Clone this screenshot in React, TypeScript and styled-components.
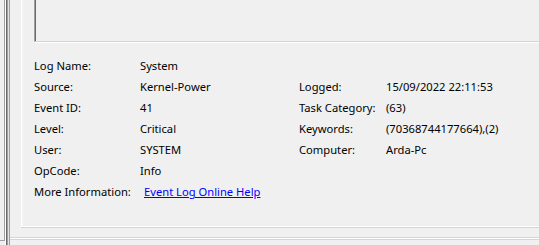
import React from 'react';
import styled, { createGlobalStyle } from 'styled-components';

const GlobalStyle = createGlobalStyle`
  html, body {
    margin: 0;
    padding: 0;
    background: #f0f0f0;
  }
  body {
    font-family: 'Noto Sans', 'Liberation Sans', sans-serif;
    font-size: 11px;
    color: #000;
  }
`;

const leftRows = [
  { label: 'Source:', value: 'Kernel-Power' },
  { label: 'Event ID:', value: '41' },
  { label: 'Level:', value: 'Critical' },
  { label: 'User:', value: 'SYSTEM' },
];

const rightRows = [
  { label: 'Logged:', value: '15/09/2022 22:11:53' },
  { label: 'Task Category:', value: '(63)' },
  { label: 'Keywords:', value: '(70368744177664),(2)' },
  { label: 'Computer:', value: 'Arda-Pc' },
];

const Window = styled.div`
  display: flex;
  height: 245px;
  width: 539px;
  overflow: hidden;
`;

const SidePane = styled.div`
  width: 4px;
  height: 240px;
  border-right: 1px solid #a0a0a0;
  border-bottom: 1px solid #a0a0a0;
  background: #f0f0f0;
`;

const Splitter = styled.div`
  width: 3px;
  height: 245px;
  border-left: 1px solid #ffffff;
  border-right: 1px solid #a0a0a0;
  background: linear-gradient(to right, #696969 0 1px, #a0a0a0 1px 2px, #e3e3e3 2px);
`;

const Main = styled.div`
  flex: 1;
  display: flex;
  flex-direction: column;
`;

const GroupBox = styled.div`
  margin-left: 11px;
  height: 226px;
  display: flex;
  flex-direction: column;
  border-left: 1px solid #ffffff;
  border-bottom: 1px solid #ffffff;
  box-shadow: inset 1px 0 0 #f7f7f7, 0 1px 0 #d5d5d5;
`;

const TextBox = styled.div`
  margin-left: 12px;
  height: 41px;
  border-left: 1px solid #a0a0a0;
  border-bottom: 1px solid #d5d5d5;
  box-shadow: inset 1px 0 0 #696969, 0 1px 0 #ffffff;
`;

const Props = styled.div`
  margin: 13px 0 0 12px;
  display: grid;
  grid-template-columns: 106px 159px 87px auto;
  grid-auto-rows: 21px;
  align-items: center;
  white-space: nowrap;
  font-size: 11.2px;
  color: #000;
`;

const Cell = styled.div<{ $col?: number }>`
  grid-column: ${(p) => p.$col ?? 'auto'};
  line-height: 21px;
`;

const HelpLink = styled.a`
  grid-column: 2 / span 3;
  margin-left: 4px;
  color: #0000ff;
  text-decoration: underline;
  line-height: 21px;
`;

const StatusEdge = styled.div`
  margin-top: 10px;
  height: 1px;
  border-top: 1px solid #d5d5d5;
  border-bottom: 1px solid #d5d5d5;
  background: #ffffff;
`;

const App: React.FC = () => (
  <>
    <GlobalStyle />
    <Window>
      <SidePane />
      <Splitter />
      <Main>
        <GroupBox>
          <TextBox />
          <Props>
            <Cell $col={1}>Log Name:</Cell>
            <Cell $col={2}>System</Cell>
            {leftRows.map((row, i) => (
              <React.Fragment key={row.label}>
                <Cell $col={1}>{row.label}</Cell>
                <Cell $col={2}>{row.value}</Cell>
                <Cell $col={3}>{rightRows[i].label}</Cell>
                <Cell $col={4}>{rightRows[i].value}</Cell>
              </React.Fragment>
            ))}
            <Cell $col={1}>OpCode:</Cell>
            <Cell $col={2}>Info</Cell>
            <Cell $col={1}>More Information:</Cell>
            <HelpLink href="#">Event Log Online Help</HelpLink>
          </Props>
        </GroupBox>
        <StatusEdge />
      </Main>
    </Window>
  </>
);

export default App;
